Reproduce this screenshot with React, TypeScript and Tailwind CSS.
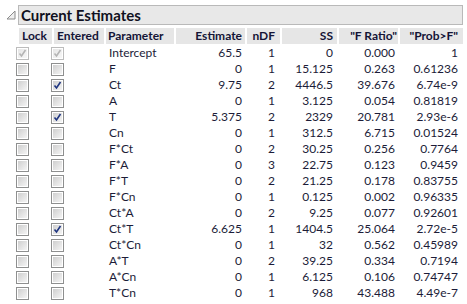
import React from 'react';

type Row = {
  name: string;
  est: string;
  ndf: string;
  ss: string;
  f: string;
  p: string;
  entered?: boolean;
  fixed?: boolean;
};

const rows: Row[] = [
  { name: 'Intercept', est: '65.5', ndf: '1', ss: '0', f: '0.000', p: '1', entered: true, fixed: true },
  { name: 'F', est: '0', ndf: '1', ss: '15.125', f: '0.263', p: '0.61236' },
  { name: 'Ct', est: '9.75', ndf: '2', ss: '4446.5', f: '39.676', p: '6.74e-9', entered: true },
  { name: 'A', est: '0', ndf: '1', ss: '3.125', f: '0.054', p: '0.81819' },
  { name: 'T', est: '5.375', ndf: '2', ss: '2329', f: '20.781', p: '2.93e-6', entered: true },
  { name: 'Cn', est: '0', ndf: '1', ss: '312.5', f: '6.715', p: '0.01524' },
  { name: 'F*Ct', est: '0', ndf: '2', ss: '30.25', f: '0.256', p: '0.7764' },
  { name: 'F*A', est: '0', ndf: '3', ss: '22.75', f: '0.123', p: '0.9459' },
  { name: 'F*T', est: '0', ndf: '2', ss: '21.25', f: '0.178', p: '0.83755' },
  { name: 'F*Cn', est: '0', ndf: '1', ss: '0.125', f: '0.002', p: '0.96335' },
  { name: 'Ct*A', est: '0', ndf: '2', ss: '9.25', f: '0.077', p: '0.92601' },
  { name: 'Ct*T', est: '6.625', ndf: '1', ss: '1404.5', f: '25.064', p: '2.72e-5', entered: true },
  { name: 'Ct*Cn', est: '0', ndf: '1', ss: '32', f: '0.562', p: '0.45989' },
  { name: 'A*T', est: '0', ndf: '2', ss: '39.25', f: '0.334', p: '0.7194' },
  { name: 'A*Cn', est: '0', ndf: '1', ss: '6.125', f: '0.106', p: '0.74747' },
  { name: 'T*Cn', est: '0', ndf: '1', ss: '968', f: '43.488', p: '4.49e-7' },
];

const cols = 'grid grid-cols-[33px_50px_68px_69px_33px_55px_59px_63px] gap-x-[2px]';

function Box({ checked, disabled }: { checked?: boolean; disabled?: boolean }) {
  return (
    <div
      className={`relative -ml-[3px] mt-[2px] h-[13px] w-[13px] border ${
        disabled ? 'border-[#bcbcbc]' : 'border-[#8e8f8f]'
      } bg-white p-[1px]`}
    >
      <div
        className={`h-full w-full ${
          disabled
            ? 'bg-[linear-gradient(135deg,#e6e6e6,#f7f7f7)]'
            : 'bg-[linear-gradient(135deg,#cfcfcf,#f4f4f4)]'
        }`}
      />
      {checked && (
        <svg className="absolute left-[1px] top-[1px]" width="9" height="9" viewBox="0 0 9 9">
          <path
            d="M1.5 4.5 L3.5 7 L7.5 1"
            fill="none"
            stroke={disabled ? '#b4b4b4' : '#1f3580'}
            strokeWidth="1.6"
          />
        </svg>
      )}
    </div>
  );
}

export default function App() {
  return (
    <div
      className="h-[304px] w-[467px] bg-white pt-[5px] text-[12px] text-[#1c1c38]"
      style={{ fontFamily: 'Lato, "Open Sans", sans-serif' }}
    >
      <div className="flex items-center">
        <svg className="ml-[6px] mr-[2px]" width="10" height="10" viewBox="0 0 10 10">
          <path d="M9 1 L9 9 L1 9 Z" fill="#f0f0f0" stroke="#8c8c8c" strokeWidth="1" />
        </svg>
        <div className="flex h-[20px] w-[445px] items-center border border-[#b9b9b9] bg-[#e8e8e8] pl-[2px]">
          <span className="text-[15px] font-bold leading-none text-[#101020]">Current Estimates</span>
        </div>
      </div>

      <div className={`${cols} ml-[19px] mt-[3px] font-bold leading-[16px] text-[#141436]`}>
        <div className="bg-[#e6e6e6] pl-[3px]">Lock</div>
        <div className="bg-[#e6e6e6] pl-[3px]">Entered</div>
        <div className="bg-[#e6e6e6] pl-[2px]">Parameter</div>
        <div className="bg-[#e6e6e6] pr-[3px] text-right">Estimate</div>
        <div className="bg-[#e6e6e6] pr-[5px] text-right">nDF</div>
        <div className="bg-[#e6e6e6] pr-[4px] text-right">SS</div>
        <div className="bg-[#e6e6e6] pr-[1px] text-right">"F Ratio"</div>
        <div className="bg-[#e6e6e6] pr-[5px] text-right">"Prob&gt;F"</div>
      </div>

      <div className="ml-[19px] mt-[1px]">
        {rows.map((r) => (
          <div key={r.name} className={`${cols} h-[16px] leading-[16px]`}>
            <div>
              <Box checked={r.fixed} disabled={r.fixed} />
            </div>
            <div>
              <Box checked={r.entered} disabled={r.fixed} />
            </div>
            <div className="pl-[3px]">{r.name}</div>
            <div className="pr-[3px] text-right">{r.est}</div>
            <div className="pr-[5px] text-right">{r.ndf}</div>
            <div className="pr-[4px] text-right">{r.ss}</div>
            <div className="pr-[3px] text-right">{r.f}</div>
            <div className="pr-[5px] text-right">{r.p}</div>
          </div>
        ))}
      </div>
    </div>
  );
}
